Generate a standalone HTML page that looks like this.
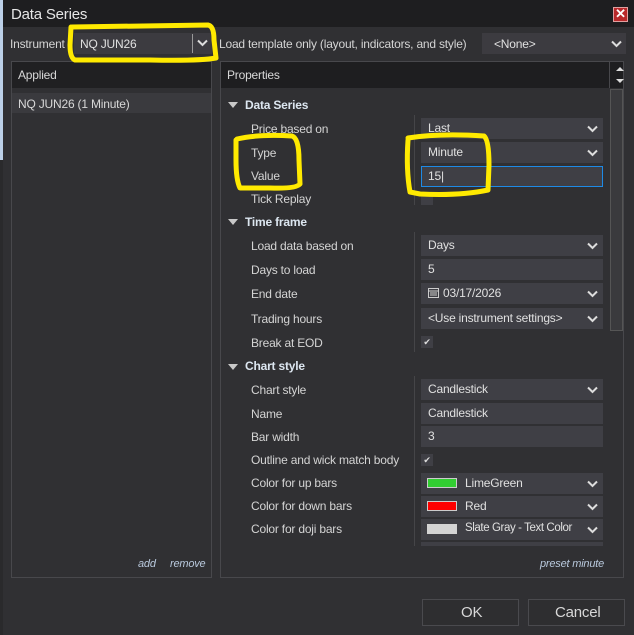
<!DOCTYPE html>
<html><head><meta charset="utf-8"><style>
*{margin:0;padding:0;box-sizing:border-box}
body{width:634px;height:635px;background:#2a2a2c;position:relative;overflow:hidden;font-family:"Liberation Sans",sans-serif;font-size:12px;letter-spacing:-0.2px;color:#d8d8d8}
.a{position:absolute}
.t{position:absolute;white-space:nowrap}
.box{position:absolute;left:421px;width:182px;background:#3f3f45;height:21px}
.box span{position:absolute;left:7px;top:3px;color:#e0e0e0;white-space:nowrap}
.chev{position:absolute;right:5px;top:7px}
.lbl{position:absolute;left:251px;color:#d4d4d4;white-space:nowrap}
.hdr{position:absolute;left:245px;font-weight:bold;color:#dce6f0}
.tri{position:absolute;left:228px;width:0;height:0;border-left:5px solid transparent;border-right:5px solid transparent;border-top:6px solid #c8c8c8}
.ck{position:absolute;left:421px;width:12px;height:12px;background:#3f3f45;color:#ddd}
</style></head><body>
<div class="a" style="left:0;top:0;width:3px;height:160px;background:#bcd0e8"></div>
<div class="a" style="left:3px;top:0;width:631px;height:635px;background:#303033"></div>
<div class="a" style="left:3px;top:0;width:631px;height:27px;background:#1e1e20"></div>
<div class="t" style="left:11px;top:6px;font-size:15px;color:#e6e6e6">Data Series</div>
<div class="a" style="left:613px;top:7px;width:15px;height:15px;background:#b8282a;border:1px solid #e0a0a0;color:#fff;font-weight:bold;font-size:13px;line-height:12px;text-align:center">✕</div>
<div class="t" style="left:10px;top:37px;color:#d4d4d4">Instrument</div>
<div class="a" style="left:74px;top:33px;width:138px;height:21px;background:#3c3b40"></div>
<div class="t" style="left:80px;top:37px;color:#e0e0e0">NQ JUN26</div>
<div class="a" style="left:192px;top:34px;width:1px;height:19px;background:#999"></div>
<svg class="a" style="left:197px;top:39px" width="11" height="8"><path d="M1 1.5 L5.5 6 L10 1.5" stroke="#ddd" stroke-width="2" fill="none"/></svg>
<div class="t" style="left:219px;top:37px;color:#d4d4d4">Load template only (layout, indicators, and style)</div>
<div class="a" style="left:482px;top:33px;width:144px;height:21px;background:#3c3b40"></div>
<div class="t" style="left:494px;top:37px;color:#e0e0e0">&lt;None&gt;</div>
<svg class="a" style="left:611px;top:40px" width="11" height="8"><path d="M1 1.5 L5.5 6 L10 1.5" stroke="#ddd" stroke-width="2" fill="none"/></svg>
<!-- left panel -->
<div class="a" style="left:11px;top:61px;width:201px;height:517px;border:1px solid #48484c;background:#303033"></div>
<div class="a" style="left:12px;top:62px;width:199px;height:26px;background:#202022"></div>
<div class="t" style="left:18px;top:68px">Applied</div>
<div class="a" style="left:12px;top:93px;width:199px;height:20px;background:#3a3a3e"></div>
<div class="t" style="left:18px;top:97px">NQ JUN26 (1 Minute)</div>
<div class="t" style="left:138px;top:558px;font-style:italic;font-size:11px;color:#b8c8dc">add</div>
<div class="t" style="left:170px;top:558px;font-style:italic;font-size:11px;color:#b8c8dc">remove</div>
<!-- right panel -->
<div class="a" style="left:220px;top:61px;width:404px;height:517px;border:1px solid #48484c;background:#303033"></div>
<div class="a" style="left:221px;top:62px;width:402px;height:26px;background:#1e1e20"></div>
<div class="t" style="left:227px;top:68px">Properties</div>
<div class="a" style="left:609px;top:62px;width:1px;height:26px;background:#48484c"></div>
<div class="a" style="left:616px;top:67px;border-left:4px solid transparent;border-right:4px solid transparent;border-bottom:4px solid #ddd"></div>
<div class="a" style="left:616px;top:79px;border-left:4px solid transparent;border-right:4px solid transparent;border-top:4px solid #ddd"></div>
<div class="a" style="left:610px;top:89px;width:13px;height:242px;background:#3a3a3d;border:1px solid #555"></div>
<div class="a" style="left:414px;top:115px;width:1px;height:90px;background:#454548"></div>
<div class="a" style="left:414px;top:232px;width:1px;height:120px;background:#454548"></div>
<div class="a" style="left:414px;top:376px;width:1px;height:170px;background:#454548"></div>

<div class="tri" style="top:102px"></div><div class="hdr" style="top:98px">Data Series</div>
<div class="lbl" style="top:122px">Price based on</div>
<div class="lbl" style="top:146px">Type</div>
<div class="lbl" style="top:169px">Value</div>
<div class="lbl" style="top:192px">Tick Replay</div>
<div class="tri" style="top:219px"></div><div class="hdr" style="top:215px">Time frame</div>
<div class="lbl" style="top:239px">Load data based on</div>
<div class="lbl" style="top:263px">Days to load</div>
<div class="lbl" style="top:287px">End date</div>
<div class="lbl" style="top:312px">Trading hours</div>
<div class="lbl" style="top:336px">Break at EOD</div>
<div class="tri" style="top:364px"></div><div class="hdr" style="top:359px">Chart style</div>
<div class="lbl" style="top:383px">Chart style</div>
<div class="lbl" style="top:407px">Name</div>
<div class="lbl" style="top:430px">Bar width</div>
<div class="lbl" style="top:453px">Outline and wick match body</div>
<div class="lbl" style="top:476px">Color for up bars</div>
<div class="lbl" style="top:499px">Color for down bars</div>
<div class="lbl" style="top:522px">Color for doji bars</div>

<div class="box" style="top:118px"><span>Last</span><svg class="chev" width="11" height="8"><path d="M1 1.5 L5.5 6 L10 1.5" stroke="#ddd" stroke-width="2" fill="none"/></svg></div>
<div class="box" style="top:142px"><span>Minute</span><svg class="chev" width="11" height="8"><path d="M1 1.5 L5.5 6 L10 1.5" stroke="#ddd" stroke-width="2" fill="none"/></svg></div>
<div class="box" style="top:166px;border:1px solid #1e8ae6"><span style="left:6px;top:2px">15|</span></div>
<div class="ck" style="top:193px"></div>
<div class="box" style="top:235px"><span>Days</span><svg class="chev" width="11" height="8"><path d="M1 1.5 L5.5 6 L10 1.5" stroke="#ddd" stroke-width="2" fill="none"/></svg></div>
<div class="box" style="top:259px"><span>5</span></div>
<div class="box" style="top:283px"><span><svg width="11" height="10" style="vertical-align:-1px;margin-right:4px"><rect x="0.5" y="0.5" width="10" height="9" fill="none" stroke="#ccc"/><path d="M0 3h11M2 5h7M2 7h7" stroke="#ccc"/></svg>03/17/2026</span><svg class="chev" width="11" height="8"><path d="M1 1.5 L5.5 6 L10 1.5" stroke="#ddd" stroke-width="2" fill="none"/></svg></div>
<div class="box" style="top:308px"><span>&lt;Use instrument settings&gt;</span><svg class="chev" width="11" height="8"><path d="M1 1.5 L5.5 6 L10 1.5" stroke="#ddd" stroke-width="2" fill="none"/></svg></div>
<div class="ck" style="top:336px;font-size:9px;line-height:12px;text-align:center">✔</div>
<div class="box" style="top:379px"><span>Candlestick</span><svg class="chev" width="11" height="8"><path d="M1 1.5 L5.5 6 L10 1.5" stroke="#ddd" stroke-width="2" fill="none"/></svg></div>
<div class="box" style="top:403px"><span>Candlestick</span></div>
<div class="box" style="top:426px"><span>3</span></div>
<div class="ck" style="top:454px;font-size:9px;line-height:12px;text-align:center">✔</div>
<div class="box" style="top:473px"><div class="a" style="left:6px;top:5px;width:30px;height:10px;background:#32cd32;border:1px solid #ccc"></div><span style="left:44px">LimeGreen</span><svg class="chev" width="11" height="8"><path d="M1 1.5 L5.5 6 L10 1.5" stroke="#ddd" stroke-width="2" fill="none"/></svg></div>
<div class="box" style="top:496px"><div class="a" style="left:6px;top:5px;width:30px;height:10px;background:#f00;border:1px solid #ccc"></div><span style="left:44px">Red</span><svg class="chev" width="11" height="8"><path d="M1 1.5 L5.5 6 L10 1.5" stroke="#ddd" stroke-width="2" fill="none"/></svg></div>
<div class="box" style="top:519px"><div class="a" style="left:6px;top:5px;width:30px;height:10px;background:#d3d3d3"></div><span style="left:44px;font-size:11.5px;letter-spacing:-0.4px">Slate Gray - Text Color</span><svg class="chev" width="11" height="8"><path d="M1 1.5 L5.5 6 L10 1.5" stroke="#ddd" stroke-width="2" fill="none"/></svg></div>
<div class="box" style="top:542px;height:4px"></div>
<div class="t" style="left:540px;top:558px;font-style:italic;font-size:11px;color:#b8c8dc">preset minute</div>

<div class="a" style="left:422px;top:599px;width:97px;height:27px;border:1px solid #4a4a4e;background:#2e2e30"></div>
<div class="t" style="left:461px;top:604px;font-size:15px;color:#d8d8d8">OK</div>
<div class="a" style="left:528px;top:599px;width:97px;height:27px;border:1px solid #4a4a4e;background:#2e2e30"></div>
<div class="t" style="left:555px;top:604px;font-size:15px;color:#d8d8d8">Cancel</div>

<svg class="a" style="left:0;top:0" width="634" height="635">
<g stroke="#ffea00" stroke-width="5" fill="none" stroke-linecap="round" stroke-linejoin="round">
<path d="M72 27 L208 25 Q214 26 214 40 L216 58 Q200 61 150 60 L75 60 Q70 58 70 45 L71 27"/>
<path d="M237 139 Q258 134 292 136 Q299 138 299 160 L300 184 Q296 189 270 188 L240 188 Q236 180 236 160 L236 140"/>
<path d="M408 138 Q440 133 484 136 Q489 140 489 165 L488 190 Q460 196 420 194 L410 192 Q406 170 408 140"/>
</g></svg>
</body></html>
